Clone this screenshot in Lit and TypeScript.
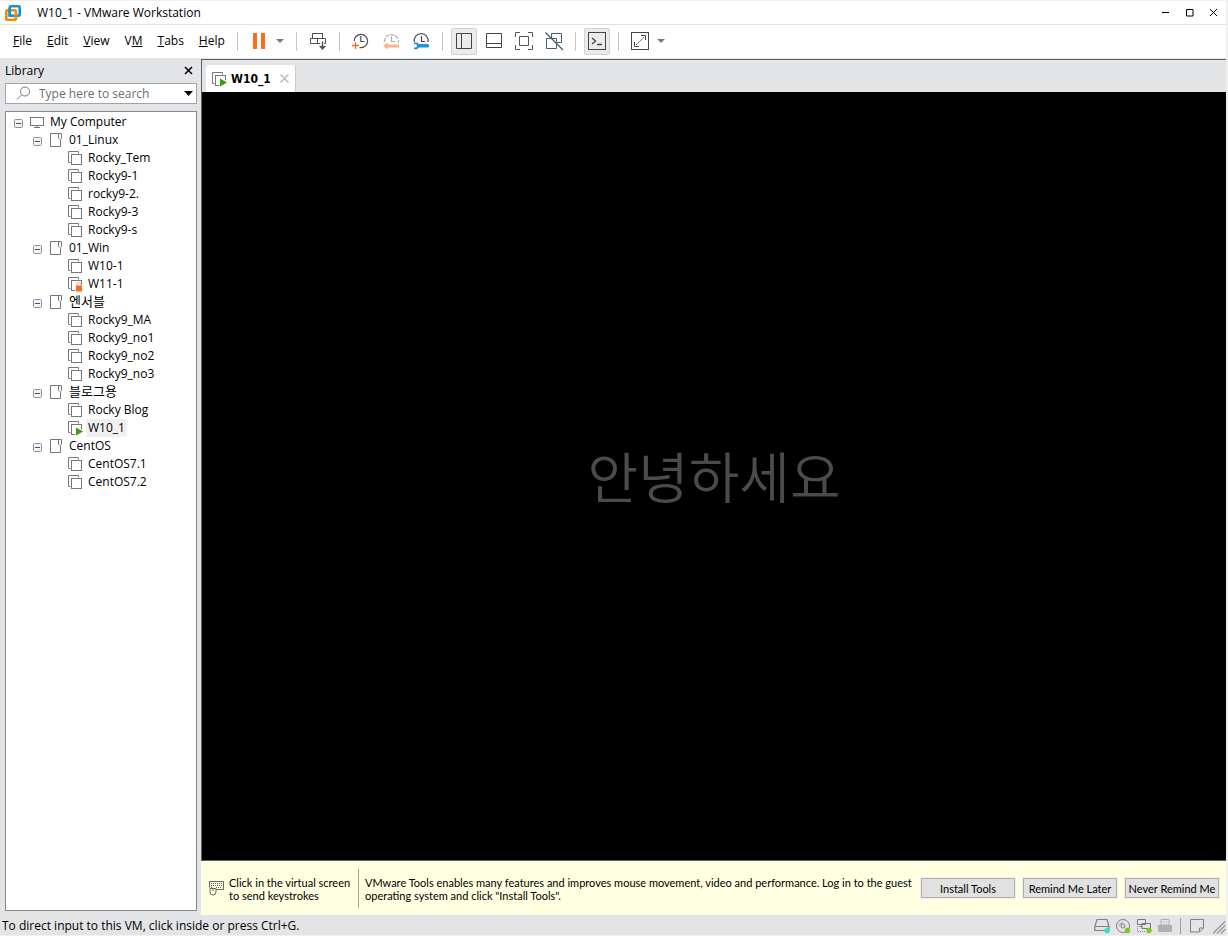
import { LitElement, html, css, svg, nothing, type TemplateResult } from "lit";
import { customElement, state, property } from "lit/decorators.js";
import { classMap } from "lit/directives/class-map.js";

type Kind = "computer" | "folder" | "vm" | "running" | "locked";

interface TreeItem {
  label: string;
  kind: Kind;
  selected?: boolean;
  children?: TreeItem[];
}

const vm = (label: string, kind: Kind = "vm", selected = false): TreeItem => ({ label, kind, selected });
const folder = (label: string, children: TreeItem[]): TreeItem => ({ label, kind: "folder", children });

const LIBRARY: TreeItem = {
  label: "My Computer",
  kind: "computer",
  children: [
    folder("01_Linux", [vm("Rocky_Tem"), vm("Rocky9-1"), vm("rocky9-2."), vm("Rocky9-3"), vm("Rocky9-s")]),
    folder("01_Win", [vm("W10-1"), vm("W11-1", "locked")]),
    folder("엔서블", [vm("Rocky9_MA"), vm("Rocky9_no1"), vm("Rocky9_no2"), vm("Rocky9_no3")]),
    folder("블로그용", [vm("Rocky Blog"), vm("W10_1", "running", true)]),
    folder("CentOS", [vm("CentOS7.1"), vm("CentOS7.2")]),
  ],
};

const hangul = /[\uac00-\ud7a3]/;

const machine = svg`
  <path d="M2.500 12.500H.5V1.500H10.500V3.500" fill="none" stroke="#777" />
  <rect x="3.500" y="4.500" width="10" height="10" fill="#fff" stroke="#777" />`;

const treeIcons: Record<Kind, unknown> = {
  computer: svg`
    <rect x="0.500" y="3.500" width="13" height="8" fill="#fff" stroke="#777" />
    <path d="M7 12v1.500M4 13.500h6" fill="none" stroke="#777" />`,
  folder: svg`
    <path d="M1.500 1.500h11v5l-1 1v7h-10z" fill="#fff" stroke="#777" />
    <path d="M9.500 1.500v4.500l1.500 1.500" fill="none" stroke="#777" />`,
  vm: machine,
  running: svg`${machine}
    <path d="M7 6.500V16h6l2-2v-4l-2.500-1z" fill="#fff" />
    <path d="M8 7.500L15 11.500L8 15.500z" fill="#3f9c0f" />`,
  locked: svg`${machine}
    <path d="M7 15.500V9l1-2h4.500v1.500H15v7z" fill="#fff" />
    <path d="M9 10V8.500a1.900 1.900 0 0 1 3.800 0V10" fill="none" stroke="#fba77a" />
    <rect x="8" y="9.500" width="6" height="6" fill="#fb6a1c" />`,
};

const toolIcons = {
  pause: svg`<path d="M7 5h4v16H7zM15 5h4v16h-4z" fill="#ff6a1b" />`,
  send: svg`<g fill="none" stroke="#4f4f4f">
      <rect x="7.500" y="5.500" width="10" height="5" />
      <path d="M15 15.500H5.500v-5h15v5H19M12.500 10.500v5" /><path d="M17.500 13.500v6" stroke-width="1.400" />
    </g><path d="M14 18h7l-3.500 4z" fill="#4f4f4f" />`,
  snapshot: svg`<g fill="none" stroke="#4f4f4f" stroke-width="1.200">
      <path d="M6.200 13A6.700 6.700 0 1 1 13 19.700H11.500" />
      <path d="M12.800 8v5.500h3.700" />
    </g><path d="M7.500 14v7M4 17.500h7" fill="none" stroke="#fb6a1c" stroke-width="1.300" />`,
  revert: svg`<g opacity=".45" fill="none" stroke="#4f4f4f" stroke-width="1.200">
      <path d="M6.500 14A7 7 0 0 1 20 11" stroke-dasharray="4 1" /><path d="M20.500 12a7 7 0 0 1-.3 3" /><path d="M13.500 8v5.500h3.500" />
    </g><path d="M5 18l5-3.500V16.500h11v3H10v2z" fill="#ffb28c" />`,
  manage: svg`<g fill="none" stroke="#4f4f4f" stroke-width="1.200">
      <path d="M6.300 14A7 7 0 1 1 20 14" /><path d="M13.500 8v5.500h3.500" />
    </g>
    <path d="M6 14.500h3l2 1.500h8.500a1.700 1.700 0 0 1 0 3.400H11l-2 1.800H6v-1.800h2.200l.8-1.600-.8-1.500H6z" fill="#1d93dd" />`,
  sidebar: svg`<path d="M5.500 5.500h15v15h-15zM10.500 5.500v15" fill="none" stroke="#444" />`,
  thumbs: svg`<path d="M5.500 5.500h15v14h-15zM5.500 15.500h15" fill="none" stroke="#444" />`,
  fullscreen: svg`<path d="M4.500 9V4.500H9M17 4.500h4.500V9M21.500 17v4.500H17M9 21.500H4.500V17M8.500 8.500h9v9h-9z" fill="none" stroke="#555" />`,
  unity: svg`<g fill="none" stroke="#456073">
      <path d="M10.500 5.500h10v9h-5M10.500 5.500v5M5.500 10.500h10v10h-10z" /><path d="M4.500 4.500l17.500 17.500" stroke-width="1.200" />
    </g>`,
  terminal: svg`<rect x="4.500" y="4.500" width="17" height="17" fill="none" stroke="#444" />
    <path d="M8 10l3.500 3-3.500 3M13 16.500h5" fill="none" stroke="#444" stroke-width="1.300" />`,
  stretch: svg`<rect x="4.500" y="4.500" width="17" height="17" fill="none" stroke="#444" />
    <path d="M9 17l8-8" fill="none" stroke="#444" stroke-dasharray="2 1" /><path d="M14 7.500h4.500V12M7.500 14v4.500H12" fill="none" stroke="#444" />`,
};

const base = css`
  :host {
    box-sizing: border-box;
    font-family: "Open Sans", "Noto Sans CJK KR", sans-serif;
    font-size: 12px;
    color: #000;
  }
  *,
  *::before,
  *::after {
    box-sizing: border-box;
  }
  button {
    font: inherit;
    color: inherit;
    border: 0;
    padding: 0;
    background: none;
    cursor: default;
  }
  svg {
    display: block;
    flex: none;
  }
`;

@customElement("title-bar")
export class TitleBar extends LitElement {
  static styles = [
    base,
    css`
      :host {
        display: flex;
        align-items: center;
        height: 25px;
        padding-left: 5px;
        background: #fff;
        border-top: 1px solid #f0f0f0;
        border-bottom: 1px solid #e0e1e2;
      }
      h1 {
        flex: 1;
        margin: 0 0 0 16px;
        font-size: 12px;
        font-weight: 400;
      }
      button {
        width: 24px;
        height: 20px;
        display: grid;
        place-items: center;
      }
    `,
  ];

  render() {
    return html`
      <svg width="16" height="16" viewBox="0 0 16 16" fill="none" stroke-width="2.600" aria-hidden="true">
        <rect x="4.700" y="1.300" width="10" height="9.500" rx="1" stroke="#0f95d3" />
        <rect x="1.300" y="5.300" width="9.600" height="9.400" rx="1" stroke="#f28a08" />
        <path d="M4.700 3v7.800H8" stroke="#0f95d3" />
      </svg>
      <h1>W10_1 - VMware Workstation</h1>
      <button aria-label="Minimize">
        <svg width="8" height="8"><path d="M0 3.500h7" stroke="#000" /></svg>
      </button>
      <button aria-label="Maximize">
        <svg width="8" height="8"><path d="M.5 .5h6.500v6.500H.5z" fill="none" stroke="#000" /></svg>
      </button>
      <button aria-label="Close">
        <svg width="8" height="8"><path d="M0 0l7 7M7 0l-7 7" stroke="#000" /></svg>
      </button>
    `;
  }
}

@customElement("tool-bar")
export class ToolBar extends LitElement {
  static styles = [
    base,
    css`
      :host {
        display: flex;
        align-items: center;
        height: 34px;
        background: #fff;
        border-bottom: 1px solid #e3e4e6;
      }
      nav {
        display: flex;
        gap: 15px;
        width: 237px;
        padding: 0 0 2px 13px;
      }
      .separator {
        width: 1px;
        height: 19px;
        margin-right: 8px;
        background: #c6c6c6;
      }
      .group {
        display: flex;
        gap: 4px;
        margin-right: 8px;
      }
      .group.split {
        gap: 0;
      }
      .tool {
        width: 26px;
        height: 27px;
        border-radius: 3px;
      }
      .tool.pressed {
        background: #eaebec;
        box-shadow: inset 0 0 0 1px #d2d3d4;
      }
      .arrow {
        width: 16px;
        height: 27px;
      }
    `,
  ];

  private tool(label: string, icon: unknown, pressed = false) {
    return html`<button class=${classMap({ tool: true, pressed })} aria-label=${label}>
      <svg width="26" height="27" viewBox="0 0 26 27">${icon}</svg>
    </button>`;
  }

  private arrow(label: string) {
    return html`<button class="arrow" aria-label=${label}>
      <svg width="16" height="27"><path d="M4 11h8l-4 4z" fill="#7a7a7a" /></svg>
    </button>`;
  }

  render() {
    const sep = html`<span class="separator"></span>`;
    const i = toolIcons;
    return html`
      <nav aria-label="Menu">
        <button><u>F</u>ile</button>
        <button><u>E</u>dit</button>
        <button><u>V</u>iew</button>
        <button>V<u>M</u></button>
        <button><u>T</u>abs</button>
        <button><u>H</u>elp</button>
      </nav>
      ${sep}
      <div class="group split">${this.tool("Suspend", i.pause)}${this.arrow("Power options")}</div>
      ${sep}
      <div class="group">${this.tool("Send Ctrl+Alt+Del", i.send)}</div>
      ${sep}
      <div class="group">
        ${this.tool("Take snapshot", i.snapshot)}${this.tool("Revert snapshot", i.revert)}${this.tool("Manage snapshots", i.manage)}
      </div>
      ${sep}
      <div class="group">
        ${this.tool("Library", i.sidebar, true)}${this.tool("Thumbnail bar", i.thumbs)}${this.tool("Full screen", i.fullscreen)}${this.tool("Unity", i.unity)}
      </div>
      ${sep}
      <div class="group">${this.tool("Console view", i.terminal, true)}</div>
      ${sep}
      <div class="group split">${this.tool("Stretch guest", i.stretch)}${this.arrow("Stretch options")}</div>
    `;
  }
}

@customElement("library-panel")
export class LibraryPanel extends LitElement {
  @state() private collapsed = new Set<string>();

  static styles = [
    base,
    css`
      :host {
        display: flex;
        flex-direction: column;
        padding: 0 4px 4px 5px;
        background: #e3e4e6;
      }
      header {
        display: flex;
        align-items: center;
        justify-content: space-between;
        height: 24px;
        padding: 0 4px 2px 0;
      }
      h2 {
        margin: 0;
        font-size: 12px;
        font-weight: 400;
      }
      .search {
        display: flex;
        align-items: center;
        height: 21px;
        padding: 0 3px 0 10px;
        background: #fff;
        border: 1px solid #a0a3a8;
      }
      .search input {
        flex: 1;
        min-width: 0;
        height: 19px;
        margin-left: 8px;
        padding: 0;
        border: 0;
        outline: 0;
        background: none;
        font: inherit;
      }
      .search input::placeholder {
        color: #6d6d6d;
        opacity: 1;
      }
      .tree {
        flex: 1;
        margin-top: 7px;
        padding-top: 1px;
        background: #fff;
        border: 1px solid #828790;
      }
      ul {
        margin: 0;
        padding: 0;
        list-style: none;
      }
      ul ul {
        padding-left: 19px;
      }
      .row {
        display: flex;
        align-items: center;
        height: 18px;
        padding-left: 8px;
      }
      .expander {
        width: 9px;
        height: 9px;
        margin: 3px 7px 0 0;
      }
      .expander.leaf {
        visibility: hidden;
      }
      .label {
        margin-left: 2px;
        padding: 0 2px;
        line-height: 18px;
        white-space: nowrap;
      }
      .label.selected {
        background: #f0f0f0;
      }
      .label.hangul {
        padding-bottom: 2px;
        font-size: 13px;
      }
    `,
  ];

  private toggle(label: string) {
    const next = new Set(this.collapsed);
    if (!next.delete(label)) next.add(label);
    this.collapsed = next;
  }

  private item(node: TreeItem): TemplateResult {
    const open = !this.collapsed.has(node.label);
    const labelClass = { label: true, selected: !!node.selected, hangul: hangul.test(node.label) };
    return html`<li role="treeitem" aria-expanded=${node.children ? String(open) : nothing}>
      <div class="row">
        ${node.children
          ? html`<button class="expander" aria-label="Toggle ${node.label}" @click=${() => this.toggle(node.label)}>
              <svg width="9" height="9">
                <rect x=".5" y=".5" width="8" height="8" rx="1" fill="#f4f4f4" stroke="#919191" />
                <path d="M2 4.500h5" stroke="#3c4f92" />
                ${open ? nothing : svg`<path d="M4.500 2v5" stroke="#3c4f92" />`}
              </svg>
            </button>`
          : html`<span class="expander leaf"></span>`}
        <svg width="16" height="18" viewBox="0 0 16 18" aria-hidden="true">
          <g transform="translate(0 1)">${treeIcons[node.kind]}</g>
        </svg>
        <span class=${classMap(labelClass)}>${node.label}</span>
      </div>
      ${node.children && open ? html`<ul role="group">${node.children.map((c) => this.item(c))}</ul>` : nothing}
    </li>`;
  }

  render() {
    return html`
      <header>
        <h2>Library</h2>
        <button aria-label="Close library">
          <svg width="9" height="9"><path d="M1 1l7 7M8 1L1 8" stroke="#000" stroke-width="1.500" /></svg>
        </button>
      </header>
      <div class="search">
        <svg width="15" height="15" fill="none" stroke="#777" aria-hidden="true">
          <circle cx="9" cy="5.500" r="4.500" /><path d="M5.700 8.800L1 13.500" />
        </svg>
        <input type="text" aria-label="Search library" placeholder="Type here to search" />
        <button aria-label="Search options">
          <svg width="9" height="5"><path d="M0 0h9L4.500 5z" fill="#000" /></svg>
        </button>
      </div>
      <ul class="tree" role="tree" aria-label="Library">${this.item(LIBRARY)}</ul>
    `;
  }
}

@customElement("vm-console")
export class VmConsole extends LitElement {
  @property() name = "W10_1";

  static styles = [
    base,
    css`
      :host {
        display: flex;
        flex-direction: column;
        min-width: 0;
      }
      .view {
        flex: 1;
        display: flex;
        flex-direction: column;
        border: solid #5e6167;
        border-width: 1px 0 1px 1px;
      }
      .tabs {
        display: flex;
        align-items: flex-end;
        height: 32px;
        padding-left: 4px;
        background: #e3e4e6;
      }
      .tab {
        display: flex;
        align-items: center;
        height: 27px;
        padding: 0 6px;
        background: #fff;
        border-right: 1px solid #cbcccd;
        border-radius: 3px 3px 0 0;
      }
      .tab .title {
        margin: 0 9px 0 3px;
        font: bold 12px "DejaVu Sans Condensed", "DejaVu Sans", sans-serif;
      }
      .screen {
        flex: 1;
        display: grid;
        place-items: center;
        padding-bottom: 4px;
        background: #000;
        color: #4b4b4b;
        font: 350 55px/80px "Noto Sans CJK KR", sans-serif;
      }
      .screen p {
        margin: 0;
      }
      .notice {
        display: flex;
        align-items: center;
        min-height: 54px;
        padding: 0 7px 0 8px;
        background: #ffffe1;
        font: 11px/13px Lato, sans-serif;
      }
      .notice p {
        margin: 2px 0 0;
      }
      .notice .hint {
        width: 123px;
        margin-left: 5px;
        white-space: nowrap;
      }
      .divider {
        flex: none;
        width: 1px;
        height: 39px;
        margin: 0 6px;
        background: #a0a0a0;
      }
      .notice .message {
        flex: 1;
      }
      .actions {
        display: flex;
        gap: 8px;
        margin-left: 6px;
      }
      .actions button {
        width: 94px;
        height: 20px;
        background: #e1e1e1;
        border: 1px solid #adadad;
        outline: 1px solid #f0f0ee;
        white-space: nowrap;
      }
    `,
  ];

  render() {
    return html`
      <section class="view">
        <div class="tabs" role="tablist">
          <div class="tab" role="tab" aria-selected="true">
            <svg width="16" height="18" viewBox="0 0 16 18"><g transform="translate(0 1)">${treeIcons.running}</g></svg>
            <span class="title">${this.name}</span>
            <button aria-label="Close tab">
              <svg width="9" height="9"><path d="M.5.5l8 8M8.500.5l-8 8" stroke="#bdbdbd" stroke-width="1.500" /></svg>
            </button>
          </div>
        </div>
        <div class="screen"><p lang="ko">안녕하세요</p></div>
      </section>
      <section class="notice">
        <svg width="15" height="16" fill="none" stroke="#5d6b68" aria-hidden="true">
          <path d="M7 9.500h7.500v-8H.5v6" />
          <path d="M2 3.500h11M2 5.500h11M7 7.500h6" stroke-dasharray="1 1" />
          <path d="M1 8.500h6v3.500a3 3 0 0 1-6 0zM4 8v3M2 6.500l1 2" />
        </svg>
        <p class="hint">Click in the virtual screen<br />to send keystrokes</p>
        <span class="divider"></span>
        <p class="message">
          VMware Tools enables many features and improves mouse movement, video and performance. Log in to the guest
          operating system and click "Install Tools".
        </p>
        <div class="actions">
          <button>Install Tools</button>
          <button>Remind Me Later</button>
          <button>Never Remind Me</button>
        </div>
      </section>
    `;
  }
}

@customElement("status-bar")
export class StatusBar extends LitElement {
  static styles = [
    base,
    css`
      :host {
        display: flex;
        align-items: center;
        height: 21px;
        padding-left: 2px;
        background: #e3e4e6;
        border-bottom: 1px solid #f0f0f0;
      }
      .message {
        flex: 1;
      }
      .devices {
        display: flex;
        align-items: center;
        gap: 5px;
        padding-top: 2px;
      }
      .separator {
        width: 1px;
        height: 16px;
        margin: 0 3px 0 2px;
        background: #9d9d9d;
      }
      .grip {
        align-self: flex-end;
        margin-left: 3px;
      }
    `,
  ];

  render() {
    return html`
      <span class="message" role="status">To direct input to this VM, click inside or press Ctrl+G.</span>
      <div class="devices">
        <svg width="16" height="16" role="img" aria-label="Hard disk">
          <path d="M3 1.500h10l2 7v4H.800v-4zM1 8.500h14" fill="none" stroke="#808080" stroke-width="1.200" />
          <circle cx="13" cy="12.500" r="2.700" fill="#35dfcd" />
        </svg>
        <svg width="16" height="16" role="img" aria-label="CD/DVD">
          <circle cx="8" cy="8" r="6.500" fill="none" stroke="#808080" /><circle cx="8" cy="8" r="2" fill="none" stroke="#808080" />
          <path d="M4.500 8A3.500 3.500 0 0 1 8 4.500" fill="none" stroke="#999" />
          <circle cx="12.500" cy="12.500" r="2.700" fill="#7fc81c" />
        </svg>
        <svg width="16" height="16" role="img" aria-label="Network adapter">
          <path d="M1.500 1.500h8v5h-8zM6 5.500h8.500v5H6zM3.500 8.500H6" fill="none" stroke="#777" />
          <path d="M1.500 8v6M2 13.500h8" fill="none" stroke="#888" stroke-dasharray="1 1" />
          <circle cx="13" cy="12.500" r="2.700" fill="#7fc81c" />
        </svg>
        <svg width="16" height="16" role="img" aria-label="USB controller">
          <path d="M4 1.500h8V7H4z" fill="#e3e4e6" stroke="#b0b0b0" /><path d="M6 4h1M9 4h1" stroke="#aaa" />
          <path d="M1 7h14v6l-1 1H2l-1-1z" fill="#b0b0b0" />
        </svg>
        <span class="separator"></span>
        <svg width="16" height="16" role="img" aria-label="Message log">
          <path d="M1.500 1.500h13v8.500l-4 4h-9zM14.500 10h-4v4" fill="none" stroke="#808080" />
        </svg>
        <svg class="grip" width="13" height="13" aria-hidden="true">
          <path d="M0 12.500L12.500 0M4 12.500L12.500 4M8 12.500L12.500 8" stroke="#9a9a9a" stroke-width="1.300" />
        </svg>
      </div>
    `;
  }
}

@customElement("app-root")
export class AppRoot extends LitElement {
  static styles = [
    base,
    css`
      :host {
        display: flex;
        flex-direction: column;
        min-height: 100vh;
        border: solid #f0f0f0;
        border-width: 0 2px 0 0;
        background: #e3e4e6;
      }
      .workspace {
        flex: 1;
        display: flex;
      }
      library-panel {
        flex: none;
        width: 201px;
      }
      vm-console {
        flex: 1;
      }
    `,
  ];

  render() {
    return html`
      <title-bar></title-bar>
      <tool-bar></tool-bar>
      <main class="workspace">
        <library-panel></library-panel>
        <vm-console name="W10_1"></vm-console>
      </main>
      <status-bar></status-bar>
    `;
  }
}
